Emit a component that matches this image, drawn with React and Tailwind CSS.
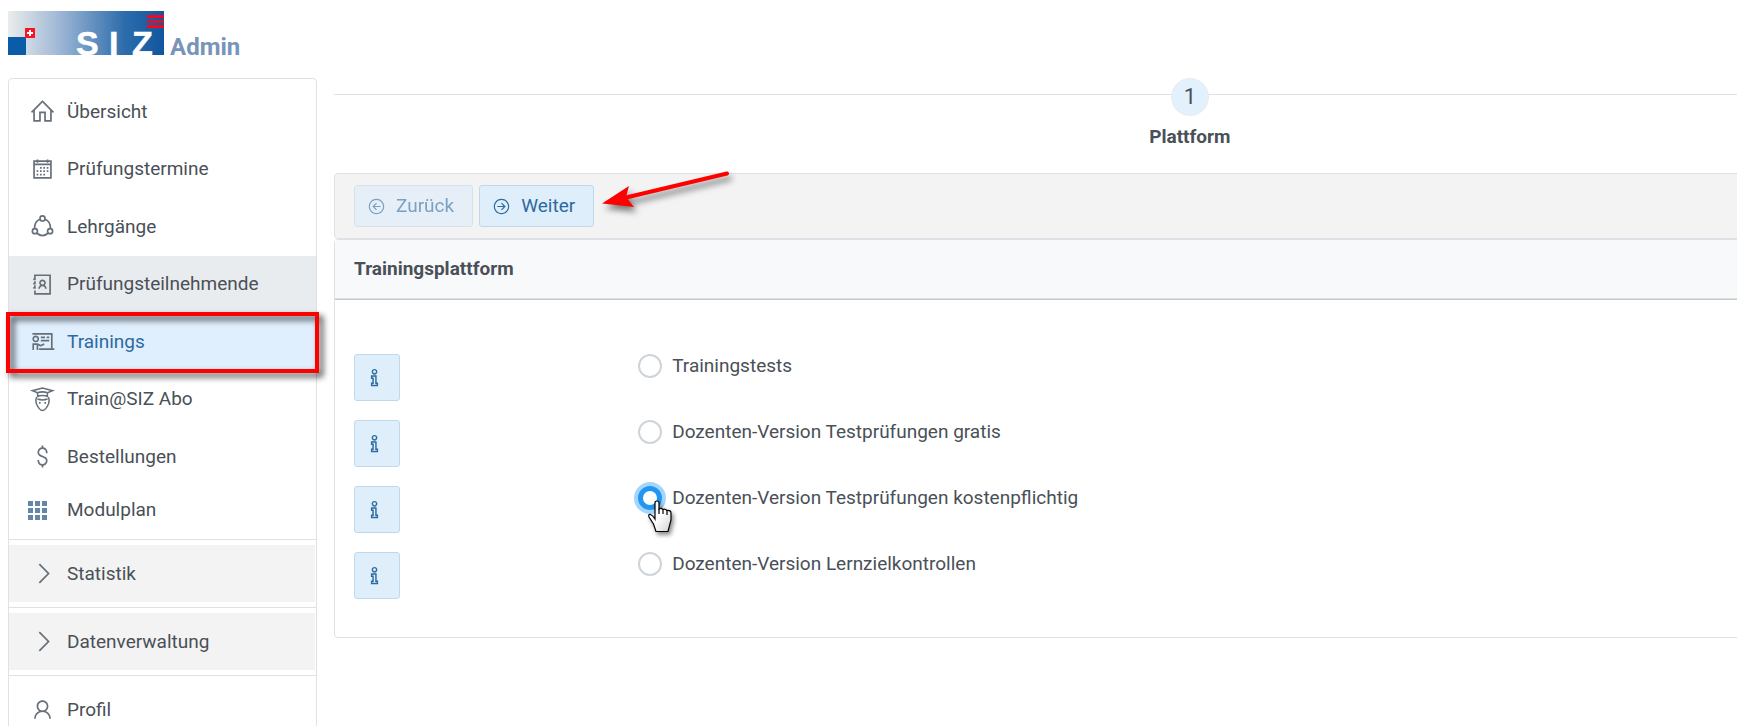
import React, { useState } from 'react';
import {
    LiaHomeSolid,
    LiaCalendarSolid,
    LiaAddressBook,
    LiaChalkboardTeacherSolid,
    LiaDollarSignSolid,
    LiaAngleRightSolid,
    LiaUser,
    LiaInfoSolid,
    LiaArrowCircleLeftSolid,
    LiaArrowCircleRightSolid,
} from 'react-icons/lia';

const CoursesIcon = ({ className }) => (
    <svg className={className} viewBox="0 0 32 32" fill="none" stroke="currentColor" strokeWidth="2">
        <circle cx="16" cy="6.500" r="3" />
        <circle cx="7" cy="21.500" r="3" />
        <circle cx="25" cy="21.500" r="3" />
        <path d="M13 7.500C9 9 6.500 13 6.500 18.500M19 7.500C23 9 25.500 13 25.500 18.500M9.500 24C13.500 27.500 18.500 27.500 22.500 24" />
    </svg>
);

const GraduateIcon = ({ className }) => (
    <svg className={className} viewBox="0 0 32 32" fill="none" stroke="currentColor" strokeWidth="1.8">
        <path d="M16 2.500L4 5.500L10 8C13.500 6.800 18.500 6.800 22 8L28 5.500Z" />
        <path d="M10 8L10.500 13M22 8L21.500 13M10 12.500C13 10.800 19 10.800 22 12.500" />
        <path d="M9.500 13C8 14.500 8 18 8.800 21C10.500 25 13.500 29 16 29C18.500 29 21.500 25 23.200 21C24 18 24 14.500 22.500 13" />
        <path d="M10 15.500C13 16.500 19 16.500 22 15.500" />
        <path d="M11.800 20h2M18.200 20h2" />
    </svg>
);

const GridIcon = ({ className }) => (
    <svg className={className} viewBox="0 0 19 19" fill="currentColor">
        {[0, 7, 14].map((y) =>
            [0, 7, 14].map((x) => <rect key={`${x}-${y}`} x={x} y={y} width="5" height="5" />)
        )}
    </svg>
);

const Logo = () => (
    <svg className="h-11 w-[156px] overflow-visible" viewBox="0 0 156 44" role="img" aria-label="SIZ">
        <defs>
            <linearGradient id="logoBg" x1="0" y1="0" x2="1" y2="0">
                <stop offset="0" stopColor="#e9edec" />
                <stop offset="0.3" stopColor="#a6bcd8" />
                <stop offset="0.75" stopColor="#2c6cab" />
                <stop offset="1" stopColor="#10569f" />
            </linearGradient>
        </defs>
        <rect width="156" height="44" fill="url(#logoBg)" />
        <rect y="26" width="18" height="18" fill="#0a5ca8" />
        <rect x="17" y="17" width="10" height="10" fill="#fa1322" />
        <path d="M22 19v6M19 22h6" stroke="#fff" strokeWidth="2" />
        <path d="M139 5.500h17M139 15.500h17" stroke="#f5071c" strokeWidth="3" />
        <path d="M139 10.500h17" stroke="#c01c3c" strokeWidth="3" />
        <g
            fill="#fff"
            stroke="#fff"
            strokeWidth="0.500"
            fontFamily="'Liberation Sans', Arial, sans-serif"
            fontWeight="700"
            fontSize="34"
        >
            <text x="68" y="43.500">S</text>
            <text x="101" y="43.500">I</text>
            <text x="124" y="43.500">Z</text>
        </g>
    </svg>
);

const Arrow = () => (
    <svg
        className="pointer-events-none absolute top-[-17px] left-full ml-1.5 h-[50px] w-[140px] drop-shadow-[3px_5px_3px_rgba(0,0,0,0.5)]"
        viewBox="0 0 140 50"
        aria-hidden="true"
    >
        <path d="M24 30L127 5.500" stroke="#f00" strokeWidth="4" strokeLinecap="round" />
        <path d="M2 35.500L29 18L26 29L34 39Z" fill="#f00" />
    </svg>
);

const HandCursor = () => (
    <svg
        className="pointer-events-none absolute top-[14px] left-[9px] h-[34px] w-[26px] drop-shadow-[2px_3px_2px_rgba(0,0,0,0.45)]"
        viewBox="0 0 26 34"
        aria-hidden="true"
    >
        <defs>
            <linearGradient id="handFill" x1="0" y1="0" x2="1" y2="1">
                <stop offset="0.5" stopColor="#fff" />
                <stop offset="1" stopColor="#d0d0d0" />
            </linearGradient>
        </defs>
        <path
            d="M8 3Q8 1 10 1Q12 1 12 3V9Q14 7.500 16 9.500Q18 8.500 20 10.500Q24 10 24 13V20L21 31.500H9L6.500 24L2 17Q1 14 3.500 14.500Q6 15.500 8 19Z"
            fill="url(#handFill)"
            stroke="#000"
            strokeWidth="1.200"
        />
        <path d="M12 9V14M16 9.500V14M20 10.500V15" stroke="#000" strokeWidth="1.200" />
    </svg>
);

const menuItems = [
    { label: 'Übersicht', icon: LiaHomeSolid },
    { label: 'Prüfungstermine', icon: LiaCalendarSolid },
    { label: 'Lehrgänge', icon: CoursesIcon },
    { label: 'Prüfungsteilnehmende', icon: LiaAddressBook, hovered: true },
    { label: 'Trainings', icon: LiaChalkboardTeacherSolid, active: true },
    { label: 'Train@SIZ Abo', icon: GraduateIcon },
    { label: 'Bestellungen', icon: LiaDollarSignSolid },
];

const platforms = [
    'Trainingstests',
    'Dozenten-Version Testprüfungen gratis',
    'Dozenten-Version Testprüfungen kostenpflichtig',
    'Dozenten-Version Lernzielkontrollen',
];

const Sidebar = () => (
    <nav className="w-[309px] shrink-0 rounded-t border border-[#dee2e6] pt-[5px]">
        <ul>
            {menuItems.map(({ label, icon: Icon, hovered, active }) => (
                <li key={label} className="relative h-[57px] even:h-[58px]">
                    <a
                        href="#"
                        className={`flex h-full items-center gap-[11px] pb-0.5 pl-5 ${hovered ? 'bg-[#e9ecef]' : ''} ${active ? 'bg-[#e0effd] text-[#2c6aa0]' : ''}`}
                    >
                        <Icon className="size-[27px] text-[#66707a]" />
                        {label}
                    </a>
                    {active && (
                        <span className="pointer-events-none absolute -inset-x-[3px] -inset-y-[2px] z-10 border-4 border-[#f00] drop-shadow-[4px_4px_3px_rgba(0,0,0,0.75)]" />
                    )}
                </li>
            ))}
            <li className="pb-[5px]">
                <a href="#" className="flex h-12 items-center gap-5 pl-[19px]">
                    <GridIcon className="size-[19px] text-[#6487a8]" />
                    Modulplan
                </a>
            </li>
            {['Statistik', 'Datenverwaltung'].map((label) => (
                <li key={label} className="border-t border-[#dee2e6] py-[5px] pr-px">
                    <button type="button" className="flex h-[57px] w-full items-center gap-[11px] bg-[#f3f3f3] pl-5">
                        <LiaAngleRightSolid className="size-[27px] text-[#66707a]" />
                        {label}
                    </button>
                </li>
            ))}
            <li className="border-t border-[#dee2e6] py-[5px]">
                <a href="#" className="flex h-[57px] items-center gap-[11px] pl-5">
                    <LiaUser className="size-[27px] text-[#66707a]" />
                    Profil
                </a>
            </li>
        </ul>
    </nav>
);

const App = () => {
    const [selected, setSelected] = useState(2);

    return (
        <div className="h-screen overflow-hidden bg-white pl-2 font-['Roboto',sans-serif] text-[19px] leading-6 text-[#495057]">
            <header className="flex h-[78px] items-start gap-1.5 pt-[11px]">
                <Logo />
                <h1 className="pt-5 text-2xl leading-8 font-bold text-[#7894b8]">Admin</h1>
            </header>

            <div className="flex gap-[17px]">
                <Sidebar />

                <main className="min-w-0 flex-1 overflow-hidden">
                    {/* the wizard is wider than the window and runs out on the right */}
                    <div className="w-[122%]">
                        <ol className="flex h-[95px]">
                            <li className="relative flex flex-1 flex-col items-center gap-[9px] before:absolute before:inset-x-0 before:top-4 before:border-t before:border-[#dee2e6]">
                                <span className="relative flex size-[38px] items-center justify-center rounded-full border border-[#e9ecef] bg-[#e3f1fd] text-[22px]">
                                    1
                                </span>
                                <span className="font-bold">Plattform</span>
                            </li>
                        </ol>

                        <div className="flex gap-1.5 rounded border border-[#dee2e6] bg-[#f3f3f3] px-[19px] py-[11px]">
                            <button
                                type="button"
                                disabled
                                className="flex h-[42px] items-center gap-2.5 rounded-[3px] border border-[#bfd9ec] bg-[#dfeefb] pr-[18px] pl-3 text-[#2c6aa0] opacity-60"
                            >
                                <LiaArrowCircleLeftSolid className="size-[19px]" />
                                Zurück
                            </button>
                            <div className="relative">
                                <button
                                    type="button"
                                    className="flex h-[42px] items-center gap-2.5 rounded-[3px] border border-[#bfd9ec] bg-[#dfeefb] pr-[18px] pl-3 text-[#2c6aa0]"
                                >
                                    <LiaArrowCircleRightSolid className="size-[19px]" />
                                    Weiter
                                </button>
                                <Arrow />
                            </div>
                        </div>

                        <section className="rounded border border-[#dee2e6]">
                            <div className="border-b border-[#c4c6c9]">
                                <h2 className="border-b border-[#dee2e6] bg-[#f8f9fb] px-[19px] py-[17px] font-bold">
                                    Trainingsplattform
                                </h2>
                            </div>
                            <div className="flex flex-col gap-[19px] px-[19px] pt-[54px] pb-[38px]">
                                {platforms.map((name, i) => (
                                    <div key={name} className="flex items-start">
                                        <div className="w-[17%]">
                                            <button
                                                type="button"
                                                aria-label={`Info ${name}`}
                                                className="flex h-[47px] w-[46px] items-center rounded-[3px] border border-[#bfd9ec] bg-[#dfeefb] pl-2 text-[#2c6aa0]"
                                            >
                                                <LiaInfoSolid className="size-[23px]" />
                                            </button>
                                        </div>
                                        <label className="relative flex items-center gap-2.5">
                                            <input
                                                type="radio"
                                                name="platform"
                                                checked={selected === i}
                                                onChange={() => setSelected(i)}
                                                className="size-6 appearance-none rounded-full border-2 border-[#ced4da] bg-white checked:border-[5px] checked:border-[#2196f3] checked:shadow-[0_0_0_4px_#a6d5fa]"
                                            />
                                            {name}
                                            {i === 2 && <HandCursor />}
                                        </label>
                                    </div>
                                ))}
                            </div>
                        </section>
                    </div>
                </main>
            </div>
        </div>
    );
};

export default App;
